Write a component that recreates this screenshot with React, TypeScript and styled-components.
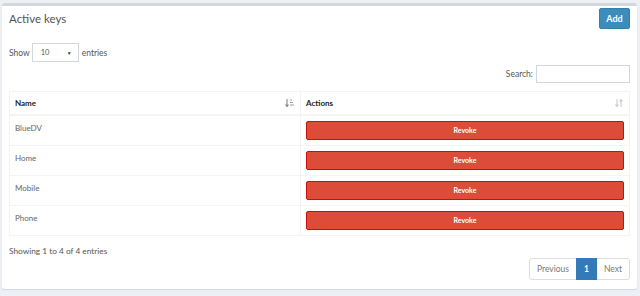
import * as React from 'react';
import { createGlobalStyle, styled } from 'styled-components';

const keys = ['BlueDV', 'Home', 'Mobile', 'Phone'];

const GlobalStyle = createGlobalStyle`
  html, body {
    margin: 0;
    background: #ecf0f5;
  }
  body {
    font-family: Lato, 'Liberation Sans', sans-serif;
    color: #333;
  }
`;

const SortIcon: React.FC<{ active?: boolean }> = ({ active }) =>
  active ? (
    <svg width="10" height="10" viewBox="0 0 10 10">
      <path d="M2 1v7M0.5 6.5L2 8.5 3.5 6.5" stroke="#888" strokeWidth="1.1" fill="none" />
      <path d="M5 2h2M5 4.5h3M5 7h4" stroke="#999" strokeWidth="1" />
    </svg>
  ) : (
    <svg width="10" height="10" viewBox="0 0 10 10">
      <path d="M3 1v7.5M1.5 6.5L3 8.5 4.5 6.5" stroke="#ccc" strokeWidth="1.1" fill="none" />
      <path d="M7 9V1.5M5.5 3.5L7 1.5 8.5 3.5" stroke="#ccc" strokeWidth="1.1" fill="none" />
    </svg>
  );

const App: React.FC = () => (
  <Page>
    <GlobalStyle />
    <Box>
      <Header>
        <Title>Active keys</Title>
        <AddButton>Add</AddButton>
      </Header>
      <Body>
        <LengthRow>
          Show
          <Select>
            <span>10</span>
            <Caret>▼</Caret>
          </Select>
          entries
        </LengthRow>
        <SearchRow>
          Search:
          <SearchInput />
        </SearchRow>
        <Table>
          <thead>
            <tr>
              <Th>
                <ThInner>
                  Name
                  <SortIcon active />
                </ThInner>
              </Th>
              <Th>
                <ThInner>
                  Actions
                  <SortIcon />
                </ThInner>
              </Th>
            </tr>
          </thead>
          <tbody>
            {keys.map((k) => (
              <tr key={k}>
                <Td $width={291}>{k}</Td>
                <Td>
                  <RevokeButton>Revoke</RevokeButton>
                </Td>
              </tr>
            ))}
          </tbody>
        </Table>
        <Info>Showing 1 to 4 of 4 entries</Info>
        <PagerRow>
          <Pager>
            <PageItem>Previous</PageItem>
            <PageItem $active>1</PageItem>
            <PageItem>Next</PageItem>
          </Pager>
        </PagerRow>
      </Body>
    </Box>
  </Page>
);

const Page = styled.div`
  padding: 3px 3px 7px 2px;
`;

const Box = styled.div`
  box-sizing: border-box;
  width: 635px;
  height: 286px;
  background: #fff;
  border-top: 3px solid #d2d6de;
  border-radius: 3px;
  box-shadow: 0 1px 1px rgba(0, 0, 0, 0.1);
`;

const Header = styled.div`
  display: flex;
  justify-content: space-between;
  align-items: flex-start;
  padding: 2px 7px 0 7px;
`;

const Title = styled.h3`
  margin: 3px 0 0 0;
  font-size: 11.5px;
  line-height: 16px;
  font-weight: 400;
  color: #555;
`;

const AddButton = styled.button`
  width: 31px;
  height: 21px;
  padding: 0;
  background: #3c8dbc;
  border: 1px solid #367fa9;
  border-radius: 2px;
  color: #fff;
  font: 700 9px / 1 Lato, sans-serif;
`;

const Body = styled.div`
  padding: 0 7px;
  font-size: 8.5px;
  color: #555;
`;

const LengthRow = styled.div`
  display: flex;
  align-items: center;
  gap: 2px;
  margin-top: 14px;
`;

const Select = styled.div`
  box-sizing: border-box;
  width: 47px;
  height: 19px;
  display: flex;
  align-items: center;
  justify-content: space-between;
  padding: 0 6px 0 8px;
  margin-right: 1px;
  border: 1px solid #d2d6de;
  font-size: 7.5px;
  color: #555;
`;

const Caret = styled.span`
  font-size: 5px;
  color: #333;
`;

const SearchRow = styled.div`
  display: flex;
  justify-content: flex-end;
  align-items: center;
  gap: 3px;
  margin-top: 3px;
`;

const SearchInput = styled.div`
  box-sizing: border-box;
  width: 94px;
  height: 18px;
  border: 1px solid #d2d6de;
`;

const Table = styled.table`
  width: 621px;
  margin-top: 8px;
  border-collapse: collapse;
  border: 1px solid #f4f4f4;
`;

const Th = styled.th`
  padding: 4px 5px;
  border: 1px solid #f4f4f4;
  border-bottom-width: 2px;
  text-align: left;
  font-size: 8px;
  line-height: 14px;
  font-weight: 700;
  color: #222;
`;

const ThInner = styled.div`
  display: flex;
  justify-content: space-between;
  align-items: center;
`;

const Td = styled.td<{ $width?: number }>`
  width: ${(p) => (p.$width ? `${p.$width - 11}px` : 'auto')};
  padding: 5px;
  border: 1px solid #f4f4f4;
  vertical-align: top;
  font-size: 8px;
  line-height: 14px;
  color: #666;
`;

const RevokeButton = styled.button`
  display: block;
  box-sizing: border-box;
  width: 100%;
  height: 19px;
  padding: 0;
  background: #dd4b39;
  border: 1px solid #c9110a;
  border-radius: 2px;
  color: #fff;
  font: 700 7px / 1 Lato, sans-serif;
`;

const Info = styled.div`
  margin-top: 8px;
  line-height: 14px;
  font-size: 8.3px;
  color: #555;
`;

const PagerRow = styled.div`
  display: flex;
  justify-content: flex-end;
`;

const Pager = styled.div`
  display: flex;
  height: 22px;
`;

const PageItem = styled.span<{ $active?: boolean }>`
  display: flex;
  align-items: center;
  padding: 0 7px;
  margin-left: -1px;
  border: 1px solid ${(p) => (p.$active ? '#337ab7' : '#ddd')};
  background: ${(p) => (p.$active ? '#337ab7' : '#fff')};
  color: ${(p) => (p.$active ? '#fff' : '#777')};
  font-size: 8.5px;
  font-weight: ${(p) => (p.$active ? 700 : 400)};
  position: relative;
  z-index: ${(p) => (p.$active ? 1 : 0)};
  &:first-child {
    border-radius: 3px 0 0 3px;
  }
  &:last-child {
    border-radius: 0 3px 3px 0;
  }
`;

export default App;
